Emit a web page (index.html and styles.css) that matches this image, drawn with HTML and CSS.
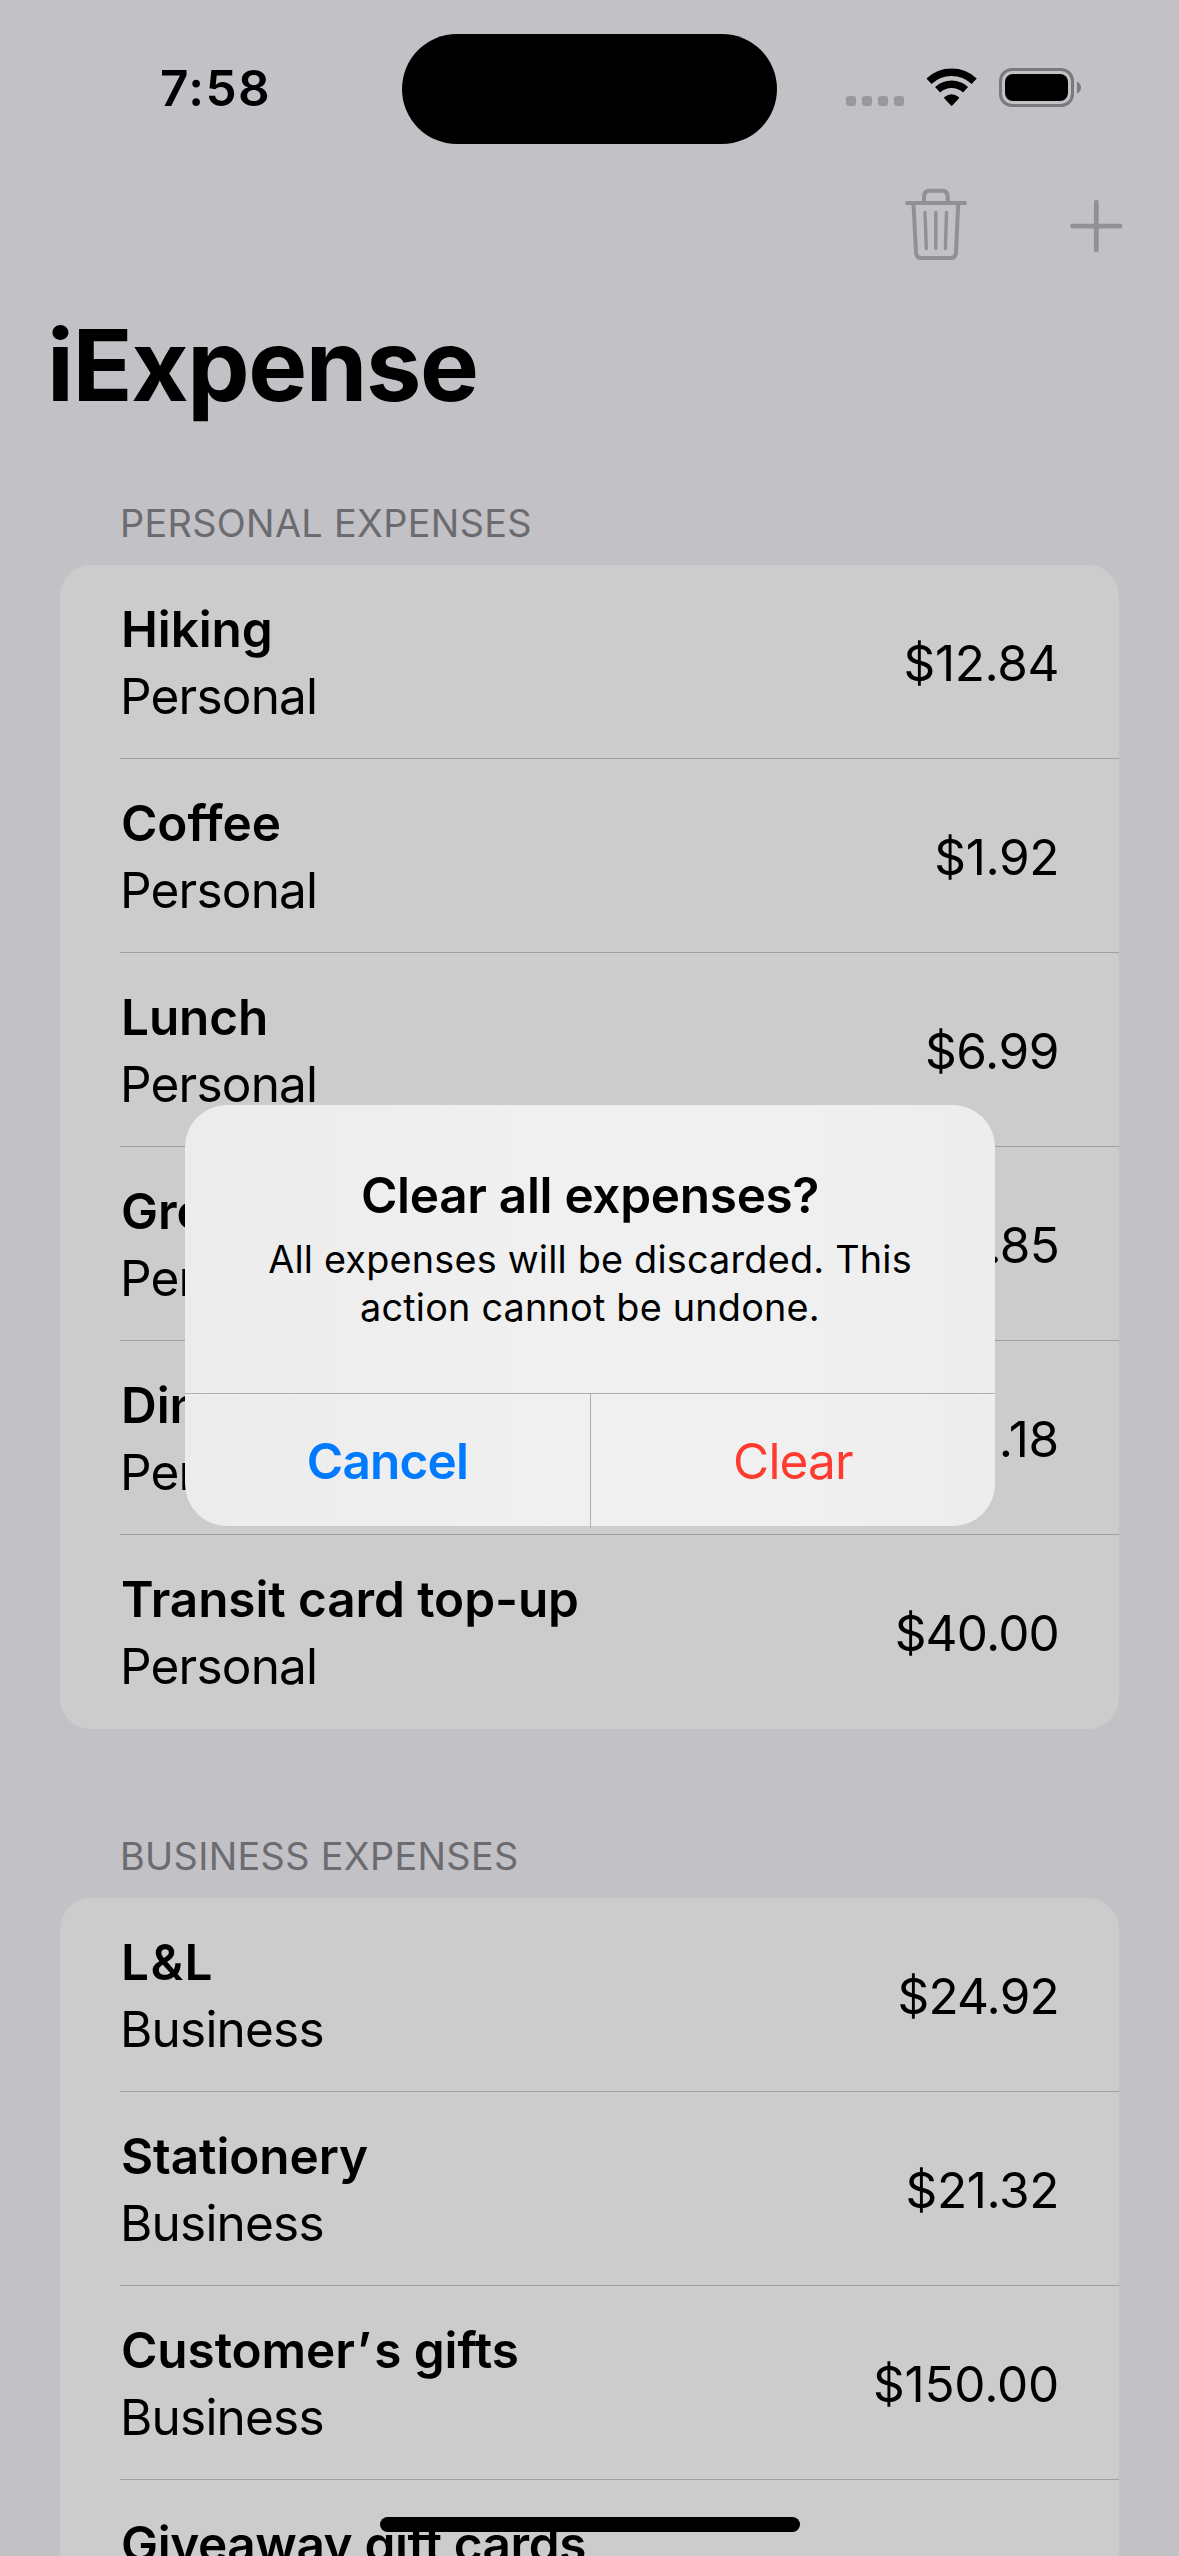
FILE: index.html
```html
<!DOCTYPE html>
<html lang="en">
<head>
<meta charset="utf-8">
<title>iExpense</title>
<link rel="stylesheet" href="styles.css">
</head>
<body>
<div class="screen">
  <header class="status-bar">
    <div class="time">7:58</div>
    <div class="island"></div>
    <svg class="status-icons" width="236" height="40" viewBox="0 0 236 40">
      <g class="dots">
        <rect x="0" y="28" width="10" height="10" rx="3.2"/>
        <rect x="16" y="28" width="10" height="10" rx="3.2"/>
        <rect x="32" y="28" width="10" height="10" rx="3.2"/>
        <rect x="48" y="28" width="10" height="10" rx="3.2"/>
      </g>
      <g class="wifi">
        <path d="M83 13.200A33 33 0 0 1 128.200 13.200" />
        <path d="M91.600 21.800A20.500 20.500 0 0 1 119.600 21.800" />
        <path class="wifi-base" d="M98.400 30.500Q97.700 29.800 98.500 29.100Q105.600 23.300 112.700 29.100Q113.500 29.800 112.800 30.500L106.300 37.400Q105.600 38.100 104.900 37.400Z"/>
      </g>
      <rect class="battery-case" x="154.500" y="1.500" width="72" height="36" rx="11.500"/>
      <rect x="159" y="6" width="63" height="27" rx="8"/>
      <path class="battery-tip" d="M231 13.500Q235 15.500 235 19.500T231 25.500Z"/>
    </svg>
  </header>
  <nav class="toolbar">
    <svg class="tool-icon" width="62" height="74" viewBox="0 0 62 74">
      <path stroke-width="4" d="M2 15H60M19 14V8.500Q19 2.700 25 2.700H37Q42.700 2.700 42.700 8.500V14M8.500 16L11 64.500Q11.400 70 16.500 70H45.500Q50.600 70 51 64.500L53.200 16"/>
      <path stroke-width="3.400" d="M20 24.500L21.300 60.500M30.800 24.500V60.500M41.500 24.500L40.400 60.500"/>
    </svg>
    <svg class="tool-icon" width="53" height="53" viewBox="0 0 53 53">
      <path stroke-width="4.800" d="M2.500 27.200H50M26.300 3.200V51"/>
    </svg>
  </nav>
  <h1 class="title">iExpense</h1>
  <main>
    <section class="group">
      <h2 class="group-title">PERSONAL EXPENSES</h2>
      <ul class="card">
        <li class="row"><div><div class="name">Hiking</div><div class="kind">Personal</div></div><div class="amount loose">$12.84</div></li>
        <li class="row"><div><div class="name">Coffee</div><div class="kind">Personal</div></div><div class="amount loose">$1.92</div></li>
        <li class="row"><div><div class="name">Lunch</div><div class="kind">Personal</div></div><div class="amount loose">$6.99</div></li>
        <li class="row"><div><div class="name">Groceries</div><div class="kind">Personal</div></div><div class="amount">$54.85</div></li>
        <li class="row"><div><div class="name">Dinner</div><div class="kind">Personal</div></div><div class="amount looser">$31.18</div></li>
        <li class="row"><div><div class="name">Transit card top-up</div><div class="kind">Personal</div></div><div class="amount">$40.00</div></li>
      </ul>
    </section>
    <section class="group">
      <h2 class="group-title">BUSINESS EXPENSES</h2>
      <ul class="card">
        <li class="row"><div><div class="name wide">L&amp;L</div><div class="kind">Business</div></div><div class="amount">$24.92</div></li>
        <li class="row"><div><div class="name">Stationery</div><div class="kind">Business</div></div><div class="amount loose">$21.32</div></li>
        <li class="row"><div><div class="name">Customer<span class="apostrophe">’</span>s gifts</div><div class="kind">Business</div></div><div class="amount looser">$150.00</div></li>
        <li class="row"><div><div class="name tight">Giveaway gift cards</div></div></li>
      </ul>
    </section>
  </main>
  <div class="alert" role="alertdialog">
    <div class="alert-body">
      <div class="alert-title">Clear all expenses?</div>
      <div class="alert-text">All expenses will be discarded. This<br>action cannot be undone.</div>
    </div>
    <div class="alert-actions">
      <div class="action cancel">Cancel</div>
      <div class="action clear">Clear</div>
    </div>
  </div>
  <div class="home-indicator"></div>
</div>
</body>
</html>
```
FILE: styles.css
```css
* { box-sizing: border-box; margin: 0; padding: 0; }

body {
  font-family: Inter, "Liberation Sans", sans-serif;
  font-size: 49.5px;
  font-variant-ligatures: none;
  color: #000;
  background: #c2c1c6;
}

.screen {
  position: relative;
  width: 1179px;
  height: 2556px;
  overflow: hidden;
}

.status-bar {
  display: grid;
  grid-template-columns: 402px 375px 402px;
  height: 177px;
  padding-top: 34px;
  align-items: start;
}

.time {
  padding: 24px 0 0 160px;
  line-height: 60px;
  font-weight: 600;
  letter-spacing: 1.4px;
}

.island { height: 110px; border-radius: 55px; background: #000; }

.status-icons { margin: 34px 0 0 69px; }
.dots { fill: #98989b; }
.wifi path { fill: none; stroke: #000; stroke-width: 7.4; }
.wifi .wifi-base { fill: #000; stroke: none; }
.battery-case { fill: none; stroke: #7a7a7c; stroke-width: 3; }
.battery-tip { fill: #7a7a7c; }

.toolbar {
  display: flex;
  justify-content: flex-end;
  align-items: center;
  gap: 103px;
  height: 96px;
  padding: 0 56px 0 0;
}

.tool-icon {
  fill: none;
  stroke: #919193;
  stroke-linecap: round;
  stroke-linejoin: round;
}

.title {
  height: 207px;
  padding: 32px 0 0 47px;
  font-size: 99px;
  line-height: 120px;
  font-weight: 700;
  letter-spacing: -1.4px;
}

.group { padding: 0 60px; }
.group + .group { padding-top: 84px; }

.group-title {
  height: 85px;
  padding: 20px 0 0 60px;
  font-size: 37.8px;
  line-height: 46px;
  font-weight: 400;
  letter-spacing: 0.35px;
  color: #6b6b70;
}

.card {
  list-style: none;
  padding-left: 60px;
  background: #ccc;
  border-radius: 31px;
}

.row {
  display: flex;
  justify-content: space-between;
  height: 194px;
  padding: 31px 60px 0 0;
  line-height: 67px;
  border-bottom: 1px solid #a0a0a2;
}
.row:last-child { border-bottom: 0; }

.name { padding-left: 1px; font-weight: 600; letter-spacing: -0.1px; }
.wide { letter-spacing: 1.4px; }
.tight { letter-spacing: -0.4px; }
.apostrophe { margin: 0 3px 0 2px; }
.kind { letter-spacing: -0.8px; }
.amount { padding-top: 34px; letter-spacing: -0.8px; }
.loose { letter-spacing: -0.4px; }
.looser { letter-spacing: -0.2px; }

.alert {
  position: absolute;
  left: 185px;
  top: 1105px;
  width: 810px;
  height: 421px;
  border-radius: 42px;
  background: linear-gradient(90deg, #ececec, #f0f0f0 45%, #f0f0f0 75%, #ededed);
  text-align: center;
}

.alert-body { height: 289px; padding-top: 58px; border-bottom: 1px solid #b0b0b2; }
.alert-title { line-height: 64px; font-weight: 600; letter-spacing: -0.3px; }
.alert-text { font-size: 37.8px; line-height: 48px; padding-top: 8px; letter-spacing: 0.2px; }

.alert-actions { display: grid; grid-template-columns: 406px 404px; height: 132px; }
.action { line-height: 134px; }
.cancel { color: #007aff; font-weight: 600; border-right: 1px solid #b0b0b2; letter-spacing: -0.8px; }
.clear { color: #ff3b30; letter-spacing: -0.8px; }

.home-indicator {
  position: absolute;
  left: 380px;
  top: 2517px;
  width: 420px;
  height: 15px;
  border-radius: 8px;
  background: #000;
}
```
